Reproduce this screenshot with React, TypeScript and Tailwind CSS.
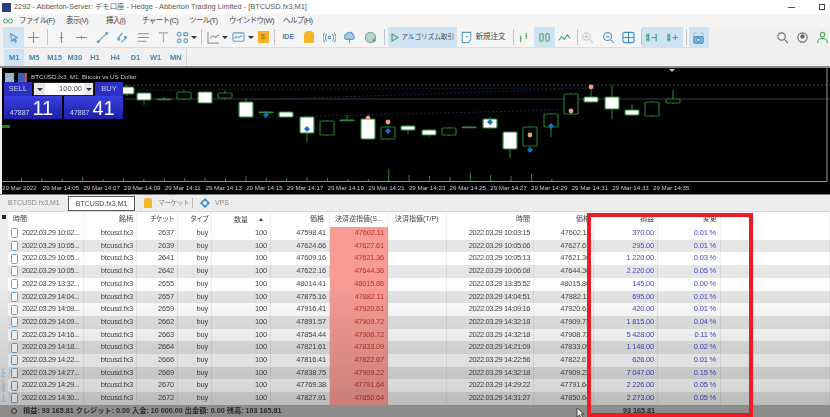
import { ReactNode } from "react";

const JP = "font-['Liberation_Sans','Noto_Sans_CJK_JP',sans-serif]";

const trades = [
  ["10:02", "2637", "47598.41", "47602.11", "10:03:15", "370.00", "0.01"],
  ["10:05", "2639", "47624.66", "47627.61", "10:05:06", "295.00", "0.01"],
  ["10:05", "2641", "47609.16", "47621.36", "10:05:13", "1 220.00", "0.03"],
  ["10:05", "2642", "47622.16", "47644.36", "10:06:08", "2 220.00", "0.05"],
  ["13:32", "2655", "48014.41", "48015.86", "13:35:52", "145.00", "0.00"],
  ["14:04", "2657", "47875.16", "47882.11", "14:04:51", "695.00", "0.01"],
  ["14:09", "2659", "47916.41", "47920.61", "14:09:16", "420.00", "0.01"],
  ["14:09", "2662", "47891.57", "47909.72", "14:32:18", "1 815.00", "0.04"],
  ["14:16", "2663", "47854.44", "47908.72", "14:32:18", "5 428.00", "0.11"],
  ["14:18", "2664", "47821.61", "47833.09", "14:21:09", "1 148.00", "0.02"],
  ["14:22", "2666", "47816.41", "47822.67", "14:22:56", "626.00", "0.01"],
  ["14:27", "2669", "47838.75", "47909.22", "14:32:18", "7 047.00", "0.15"],
  ["14:29", "2670", "47769.38", "47791.64", "14:29:22", "2 226.00", "0.05"],
  ["14:30", "2672", "47827.91", "47850.64", "14:31:27", "2 273.00", "0.05"],
];

// x, body top, body bottom, wick top, wick bottom, filled
const candles: [number, number, number, number, number, boolean][] = [
  [127, 87, 94, 85, 96, true],
  [144, 93, 100, 92, 105, true],
  [164, 99, 99.6, 97, 100, true],
  [184, 92, 99, 90, 100, false],
  [205, 92, 103, 91, 103, true],
  [225, 93, 98, 90, 100, false],
  [246, 102, 117, 98, 117, true],
  [266, 112, 112.6, 111, 114, true],
  [286, 112, 117, 112, 118, true],
  [307, 117, 133, 116, 142, true],
  [327, 121, 135, 120, 136, false],
  [347, 120, 120.6, 115, 121, true],
  [368, 119, 139, 118, 140, true],
  [388, 127, 139, 126, 140, false],
  [408, 126, 130, 125, 134, true],
  [429, 130, 135, 129, 137, true],
  [449, 128, 135, 127, 136, false],
  [469, 127, 127.6, 126, 128, true],
  [490, 119, 128, 117, 129, true],
  [510, 132, 149, 132, 158, true],
  [530, 127, 146, 126, 147, false],
  [551, 114, 127, 113, 137, false],
  [571, 94, 114, 93, 115, false],
  [591, 97, 102, 90, 103, true],
  [612, 97, 109, 85, 119, true],
  [632, 110, 115, 104, 116, true],
  [652, 102, 116, 101, 117, false],
  [673, 99, 103, 90, 104, false],
];

const volumes = [3, 3, 2, 4, 2, 3, 2, 3, 3, 3, 3, 5, 3, 3, 4, 3, 2, 2, 12, 6, 5, 4, 8, 6, 5, 7, 2];

const axisLabels = ["29 Mar 2022", "29 Mar 14:05", "29 Mar 14:07", "29 Mar 14:09", "29 Mar 14:11", "29 Mar 14:13", "29 Mar 14:15", "29 Mar 14:17", "29 Mar 14:19", "29 Mar 14:21", "29 Mar 14:23", "29 Mar 14:25", "29 Mar 14:27", "29 Mar 14:29", "29 Mar 14:31", "29 Mar 14:33", "29 Mar 14:35"];

const Icon = ({ children, className = "text-[#5f9bc8]" }: { children: ReactNode; className?: string }) => (
  <svg width="13" height="13" viewBox="0 0 14 14" fill="none" stroke="currentColor" strokeWidth="1.2" className={className}>
    {children}
  </svg>
);

const Tool = ({ children, active, w = "w-[20.5px]" }: { children: ReactNode; active?: boolean; w?: string }) => (
  <div className={`${w} h-[20px] flex items-center justify-center shrink-0 ${active ? "bg-[#cfe3f3]" : ""}`}>{children}</div>
);

const Sep = ({ className = "mx-[3px]" }: { className?: string }) => <div className={`w-px h-[16px] bg-[#c4c4c4] shrink-0 ${className}`} />;
const Caret = () => <div className="w-0 h-0 ml-[1px] mr-[1px] border-x-[3px] border-x-transparent border-t-[3px] border-t-[#333] shrink-0" />;

const Toolbar = () => (
  <div className="h-[21px] bg-[#f0f0f0] flex items-center pl-[3px]">
    <div className="flex items-center h-[21px] w-[705px] bg-[#f5f5f5] border-b border-[#dedede]">
      <Tool active><Icon><path d="M4 3l7 4-3 1 2 3-1 1-2-3-2 2z" /></Icon></Tool>
      <Tool><Icon><path d="M7 1v12M1 7h12" /></Icon></Tool>
      <Sep />
      <Tool><Icon><path d="M7 1v12M5 7h4" /></Icon></Tool>
      <Tool><Icon><path d="M1 7h12M7 5v4" /></Icon></Tool>
      <Tool><Icon><path d="M2 12L12 2" /><circle cx="2.5" cy="11.5" r="1" /><circle cx="11.5" cy="2.5" r="1" /></Icon></Tool>
      <Tool><Icon><path d="M2 8l5-6M6 12l6-6" /><circle cx="3" cy="9" r="1" /><circle cx="10" cy="7" r="1" /></Icon></Tool>
      <Tool><Icon><path d="M1 3h12M1 7h12M1 11h9" /></Icon></Tool>
      <Tool><Icon className="text-[#8fa9bd]"><path d="M2 2h10M7 2v10" /></Icon></Tool>
      <Tool w="w-[16px]"><Icon><circle cx="3.5" cy="3.5" r="2" /><circle cx="10.5" cy="10.5" r="2" /><circle cx="3.5" cy="10.5" r="2" /><path d="M8.5 2h4v3h-4z" /></Icon></Tool>
      <Caret />
      <Sep />
      <Tool w="w-[16px]"><Icon className="text-[#9a9a9a]"><path d="M1 1v12h12M3 8l3-3 3 2 4-3" /></Icon></Tool>
      <Caret />
      <Tool w="w-[18px]"><Icon><rect x="1" y="2" width="12" height="9" rx="1.5" /><path d="M3 8l2-2 2 1 4-2" /></Icon></Tool>
      <Caret />
      <Tool w="w-[16px]"><div className={`w-[11px] h-[12px] bg-[#f5b324] text-[8px] leading-[12px] text-center text-[#a86a00] ${JP}`}>$</div></Tool>
      <Sep />
      <Tool><span className={`text-[7px] font-bold text-[#4f78a8] ${JP}`}>IDE</span></Tool>
      <Tool><div className="w-[10px] h-[12px] rounded-t-[4px] bg-[#f6b62a]" /></Tool>
      <Tool><Icon><circle cx="7" cy="7" r="1.4" /><path d="M4 3.5a5 5 0 000 7M10 3.5a5 5 0 010 7M2 2a7 7 0 000 10M12 2a7 7 0 010 10" /></Icon></Tool>
      <Tool><Icon><path d="M3 9a3 3 0 01.5-5.5A4 4 0 0111 5a2.2 2.2 0 010 4z" fill="#a5cbe6" /><path d="M7 9v4" /></Icon></Tool>
      <Tool><Icon className="text-[#7fa8a0]"><circle cx="7" cy="7" r="5.5" fill="#b9d2cd" /><path d="M9 10h4M11 8v4" stroke="#4da24d" /></Icon></Tool>
      <Sep />
      <div className={`flex items-center w-[69px] h-[20px] bg-[#cfe3f3] pl-[3px] gap-[3px] text-[6.6px] text-[#3f4a55] shrink-0 ${JP}`}>
        <svg width="8" height="9" viewBox="0 0 8 9" fill="none" stroke="#4aa36c" strokeWidth="1.2"><path d="M1 1l6 3.5L1 8z" /></svg>
        <span className="whitespace-nowrap">アルゴリズム取引</span>
      </div>
      <div className={`flex items-center h-[20px] ml-[3px] w-[50px] gap-[3px] text-[7.5px] text-[#444] shrink-0 ${JP}`}>
        <Icon><path d="M2.5 1.5h9v8l-3 3h-6z" fill="#fff" /><path d="M6 6h3" /></Icon>
        <span className="whitespace-nowrap">新規注文</span>
      </div>
      <Sep className="ml-[3px]" />
      <Tool><Icon className="text-[#5da86c]"><path d="M4 5v7M3 8h2M10 2v7M9 5h2" /></Icon></Tool>
      <Tool active><Icon className="text-[#49a56d]"><rect x="2" y="3" width="3.5" height="8" rx="1" /><rect x="8.5" y="3" width="3.5" height="8" rx="1" /></Icon></Tool>
      <Tool><Icon className="text-[#4aa36c]"><path d="M1 10l3-4 3 3 3-5 3 4" /></Icon></Tool>
      <Sep className="ml-[1.5px]" />
      <Tool><Icon className="text-[#c4cdd3]"><circle cx="6" cy="6" r="4" /><path d="M9 9l4 4M4 6h4M6 4v4" /></Icon></Tool>
      <Tool><Icon><circle cx="6" cy="6" r="4.3" /><path d="M9 9l4 4M4 6h4" /></Icon></Tool>
      <Tool><Icon className="text-[#3f8fce]"><rect x="1" y="1.5" width="12" height="11" rx="2" /><path d="M7 1.5v11M1 7h12" /></Icon></Tool>
      <Sep className="ml-[1.5px]" />
      <Tool active><Icon className="text-[#3f9d8e]"><path d="M2 3v8M4 3v8M2 5h2M2 9h2M7 7h5M12 3v8" /></Icon></Tool>
      <Tool active><Icon className="text-[#3f9d8e]"><path d="M2 3v8M4 3v8M2 5h2M2 9h2M7 7h6M10 4v6" /></Icon></Tool>
      <Sep className="ml-[3px] mr-[2px]" />
      <Tool active><Icon className="text-[#4f8fc0]"><path d="M2 2h3M9 2h3M2 2v3M12 2v2" stroke="#a9c4d9" /><rect x="2" y="6" width="10" height="7" rx="1" fill="#8ab8da" /><circle cx="7" cy="9.5" r="1.8" fill="#fff" /></Icon></Tool>
    </div>
    <div className="ml-[68px] flex items-center gap-[7px]">
      <Icon className="text-[#6a6a6a]"><circle cx="6" cy="6" r="4" /><path d="M9 9l4 4" /></Icon>
      <Icon className="text-[#6a6a6a]"><circle cx="7" cy="7" r="5" /><circle cx="7" cy="6" r="1.8" fill="currentColor" /></Icon>
      <Icon className="text-[#55a35f]"><circle cx="7" cy="4" r="2.5" /><path d="M2 13v-2c0-2 3-3 5-3s5 1 5 3v2" /></Icon>
    </div>
  </div>
);

const Chart = () => (
  <div className="relative ml-[2px] h-[126px] bg-black overflow-hidden">
    <svg width="828" height="114" viewBox="2 68 828 114" className="block">
      <line x1="125" y1="85" x2="830" y2="85" stroke="#2f7a35" strokeWidth="1" strokeDasharray="1.5 2.5" />
      <line x1="125" y1="99" x2="830" y2="99" stroke="#3a3a3a" strokeWidth="1.2" />
      <path d="M134 90L585 88M250 100L600 88M240 118L560 110" stroke="#1c3352" strokeWidth="1" strokeDasharray="1.5 2.5" fill="none" />
      {candles.map(([x, top, bottom, wickTop, wickBottom, filled], i) => (
        <g key={i}>
          <line x1={x} y1={wickTop} x2={x} y2={wickBottom} stroke="#1f7a28" strokeWidth="1.2" />
          <rect x={x - 7} y={top} width="14" height={bottom - top} rx="1" fill={filled ? "#fff" : "#000"} stroke={filled ? "#2e8b35" : "#1f7a28"} strokeWidth="1.2" />
        </g>
      ))}
      <rect x="2" y="125" width="8" height="3" fill="#1f7a28" />
      {[[266, 115], [307, 129], [388, 131], [490, 122], [530, 150], [551, 126]].map(([x, y]) => (
        <path key={`${x}-${y}`} d={`M${x} ${y - 3}l3 3-3 3-3-3z`} fill="#1670c8" />
      ))}
      {[[368, 118], [388, 122], [530, 135], [571, 111], [591, 87]].map(([x, y]) => (
        <circle key={`${x}-${y}`} cx={x} cy={y} r="2.4" fill="#ef9d86" />
      ))}
      {volumes.map((h, i) => (
        <line key={i} x1={21.5 + i * 20.4} y1={181} x2={21.5 + i * 20.4} y2={181 - h} stroke="#2a8a33" strokeWidth="1" />
      ))}
      <path d="M673 181.5H827V68" fill="none" stroke="#9a9a9a" />
      <path d="M2 181.5H673" fill="none" stroke="#9a9a9a" />
      <path d="M669 69h6l-3 3z" fill="#bbb" />
    </svg>
    <div className={`flex text-[6.2px] leading-[12px] text-[#c9c9c9] whitespace-nowrap ${JP}`}>
      {axisLabels.map((label) => (
        <span key={label} className="w-[40.7px] shrink-0">{label}</span>
      ))}
    </div>

    <div className="absolute left-[3px] top-[4px] flex items-center gap-[4px]">
      <div className="w-[9px] h-[9px] bg-[#9fb5cc]" />
      <div className="w-[9px] h-[9px] bg-[#3f5fb5] border-r-2 border-[#d64545]" />
      <span className={`text-[6.2px] leading-[10px] text-[#c6c6c6] whitespace-nowrap ${JP}`}>BTCUSD.fx3, M1: Bitcoin vs US Dollar</span>
    </div>

    <div className={`absolute left-[2px] top-[14px] w-[119px] h-[37px] ${JP}`}>
      <div className="flex h-[14px] gap-px">
        <div className="w-[28px] bg-[#2b2fc4] text-[#c8d0f5] text-[7.5px] leading-[14px] text-center">SELL</div>
        <div className="flex-1 flex items-center bg-white border border-[#222]">
          <div className="w-[11px] h-full bg-[#e8e8e8] flex items-center justify-center"><Caret /></div>
          <div className="flex-1 text-right pr-[2px] text-[7.5px] text-[#444] leading-[12px]">100.00</div>
          <div className="w-[9px] h-full bg-[#e8e8e8] flex items-center justify-center"><Caret /></div>
        </div>
        <div className="w-[28px] bg-[#2b2fc4] text-[#c8d0f5] text-[7.5px] leading-[14px] text-center">BUY</div>
      </div>
      <div className="flex h-[23px] gap-[2px]">
        <div className="w-[58px] bg-linear-to-b from-[#3a3fe0] to-[#1c1fa8] text-white flex items-end pl-[6px]">
          <span className="text-[7px] leading-[12px] mr-[3px] text-[#d0d4f5]">47887</span>
          <span className="text-[20px] leading-[22px]">11</span>
        </div>
        <div className="flex-1 bg-linear-to-b from-[#3a3fe0] to-[#1c1fa8] text-white flex items-end pl-[6px]">
          <span className="text-[7px] leading-[12px] mr-[3px] text-[#d0d4f5]">47887</span>
          <span className="text-[20px] leading-[22px]">41</span>
        </div>
      </div>
    </div>
  </div>
);

const COLS = ["w-[8px]", "w-[76px]", "w-[53px]", "w-[41px]", "w-[34px]", "w-[59px]", "w-[59px]", "w-[58px]", "w-[59px]", "w-[87px]", "w-[60px]", "w-[64px]", "w-[63px]", "flex-1"];

const Cell = ({ col, className = "", children }: { col: number; className?: string; children?: ReactNode }) => (
  <div className={`${COLS[col]} h-full shrink-0 text-right pr-[3px] border-r border-[#00000010] overflow-hidden whitespace-nowrap ${className}`}>{children}</div>
);

const Header = () => (
  <div className={`flex h-[15px] bg-white text-[7px] leading-[14px] text-[#444] ${JP}`}>
    <div className="w-[8px] shrink-0 bg-[#ececec] flex justify-center pt-[3px]"><div className="w-[4px] h-[4px] bg-[#222]" /></div>
    <Cell col={1} className="!text-left pl-[5px]">時間</Cell>
    <Cell col={2}>銘柄</Cell>
    <Cell col={3} className="tracking-[-1px]">チケット</Cell>
    <Cell col={4} className="tracking-[-1px]">タイプ</Cell>
    <Cell col={5} className="flex justify-end items-center gap-[11px] pr-[7px]">数量<span className="w-0 h-0 border-x-[2.5px] border-x-transparent border-b-[3px] border-b-[#333]" /></Cell>
    <Cell col={6} className="pr-[5px]">価格</Cell>
    <Cell col={7} className="!text-left pl-[5px]">決済逆指値(S...</Cell>
    <Cell col={8} className="!text-left pl-[7px]">決済指値(T/P)</Cell>
    <Cell col={9}>時間</Cell>
    <Cell col={10}>価格</Cell>
    <Cell col={11}>損益</Cell>
    <Cell col={12}>変更</Cell>
    <Cell col={13} />
  </div>
);

const Row = ({ trade, odd }: { trade: string[]; odd: boolean }) => {
  const [open, ticket, price, sl, close, profit, change] = trade;
  return (
    <div className={`flex h-[12.71px] text-[7.5px] leading-[12.7px] text-[#484848] tracking-[-0.2px] ${odd ? "bg-[#e6e6e6]" : "bg-white"} ${JP}`}>
      <div className="w-[8px] shrink-0 bg-[#ececec]" />
      <Cell col={1} className="!text-left flex items-center gap-[4px] pl-[3px]">
        <div className="w-[7px] h-[10px] rounded-[1.5px] bg-white border border-[#6ba1c9] shrink-0" />
        <span className="tracking-[-0.4px]">2022.03.29 {open}...</span>
      </Cell>
      <Cell col={2}>btcusd.fx3</Cell>
      <Cell col={3}>{ticket}</Cell>
      <Cell col={4}>buy</Cell>
      <Cell col={5}>100</Cell>
      <Cell col={6}>{price}</Cell>
      <Cell col={7} className="bg-[#f79b95] text-[#b8352c]">{sl}</Cell>
      <Cell col={8} />
      <Cell col={9} className="tracking-[-0.4px]">2022.03.29 {close}</Cell>
      <Cell col={10}>{sl}</Cell>
      <Cell col={11} className="text-[#4549cc]">{profit}</Cell>
      <Cell col={12} className="text-[#4549cc] pr-[4px]">{change} %</Cell>
      <Cell col={13} />
    </div>
  );
};

export default function App() {
  return (
    <div className="relative w-[830px] h-[417px] overflow-hidden bg-[#f0f0f0]">
      <div className="blur-[0.5px]">
        <div className={`h-[14px] bg-white flex items-center pl-[2px] text-[7.4px] text-[#555] ${JP}`}>
          <div className="w-[9px] h-[9px] bg-[#2a3f80] mr-[3px]" />
          <span className="whitespace-nowrap">2292 - Abberton-Server: デモ口座 - Hedge - Abberton Trading Limited - [BTCUSD.fx3,M1]</span>
          <div className="ml-auto mr-[24px] w-[7px] h-px bg-[#555]" />
          <div className="mr-[5px] w-[6px] h-[6px] border border-[#444]" />
        </div>

        <div className={`h-[13px] bg-[#f4f4f4] flex items-center pl-[3px] text-[7.5px] tracking-[-0.6px] text-[#444] whitespace-nowrap ${JP}`}>
          <svg width="10" height="8" viewBox="0 0 10 8" className="mr-[6px]"><circle cx="2.5" cy="4" r="2" fill="none" stroke="#4fa36a" /><circle cx="7.5" cy="4" r="2" fill="none" stroke="#4fa36a" /></svg>
          <span className="w-[47px]">ファイル(F)</span>
          <span className="w-[40px]">表示(V)</span>
          <span className="w-[36px]">挿入(I)</span>
          <span className="w-[47px]">チャート(C)</span>
          <span className="w-[40px]">ツール(T)</span>
          <span className="w-[54px]">ウインドウ(W)</span>
          <span>ヘルプ(H)</span>
        </div>

        <Toolbar />

        <div className={`h-[18px] bg-[#f0f0f0] flex items-center pl-[4px] text-[7.5px] text-[#4a86ad] font-semibold ${JP}`}>
          <div className="flex items-center h-[17px] w-[183px] border-r border-[#d6d6d6]">
            {["M1", "M5", "M15", "M30", "H1", "H4", "D1", "W1", "MN"].map((tf, i) => (
              <div key={tf} className={`w-[20.3px] h-full text-center leading-[17px] ${i === 0 ? "bg-[#cfe3f3]" : ""}`}>{tf}</div>
            ))}
          </div>
        </div>

        <div className="h-[2px] bg-[#8a8a8a]" />
        <Chart />
        <div className="h-px bg-[#777]" />

        <div className={`h-[17px] bg-[#ededed] flex items-center text-[7px] text-[#888] border-b border-[#d9d9d9] ${JP}`}>
          <span className="ml-[8px] w-[60px] whitespace-nowrap">BTCUSD.fx3,M1</span>
          <span className="w-[67px] h-[15px] bg-white border border-[#555] text-[#444] text-center leading-[13px] whitespace-nowrap">BTCUSD.fx3,M1</span>
          <div className="ml-[9px] w-[8px] h-[10px] rounded-t-[3px] bg-[#f6b62a]" />
          <span className="ml-[6px] w-[34px] whitespace-nowrap tracking-[-0.8px]">マーケット</span>
          <div className="w-px h-[10px] bg-[#bbb]" />
          <svg width="10" height="10" viewBox="0 0 10 10" className="ml-[7px]"><path d="M5 0l5 5-5 5-5-5z" fill="#3f8fce" /><circle cx="5" cy="5" r="2" fill="#fff" /></svg>
          <span className="ml-[5px]">VPS</span>
        </div>

        <div className="relative">
          <Header />
          {trades.map((trade, i) => (
            <Row key={trade[1]} trade={trade} odd={i % 2 === 1} />
          ))}
          <div className={`flex h-[12px] bg-[#adadad] text-[7.2px] leading-[12px] text-[#333] font-bold whitespace-nowrap ${JP}`}>
            <div className="w-[8px] shrink-0" />
            <div className="w-[6px] h-[6px] mt-[3px] ml-[3px] rounded-full border border-[#444] shrink-0" />
            <span className="ml-[6px] w-[596px] shrink-0">損益: 93 165.81 クレジット: 0.00 入金: 10 000.00 出金額: 0.00 残高: 103 165.81</span>
            <span className="w-[36px] text-right shrink-0">93 165.81</span>
          </div>
          <div className="absolute left-0 right-0 top-[70px] bottom-0 pointer-events-none bg-linear-to-b from-transparent to-black/20" />
          <span className={`absolute left-[1px] bottom-[14px] text-[5px] leading-[6px] text-[#5b8fb5] [writing-mode:vertical-rl] rotate-180 ${JP}`}>ツールボックス</span>
        </div>
      </div>

      <svg width="9" height="12" viewBox="0 0 9 12" className="absolute left-[576px] top-[407px]"><path d="M1 1v9l2.5-2 2 3.5 1.5-1-2-3.5h3z" fill="#eee" stroke="#333" strokeWidth="0.8" /></svg>
      <div className="absolute left-[587px] top-[213px] w-[166px] h-[204px] border-[4px] border-[#ed1c24] pointer-events-none" />
    </div>
  );
}
